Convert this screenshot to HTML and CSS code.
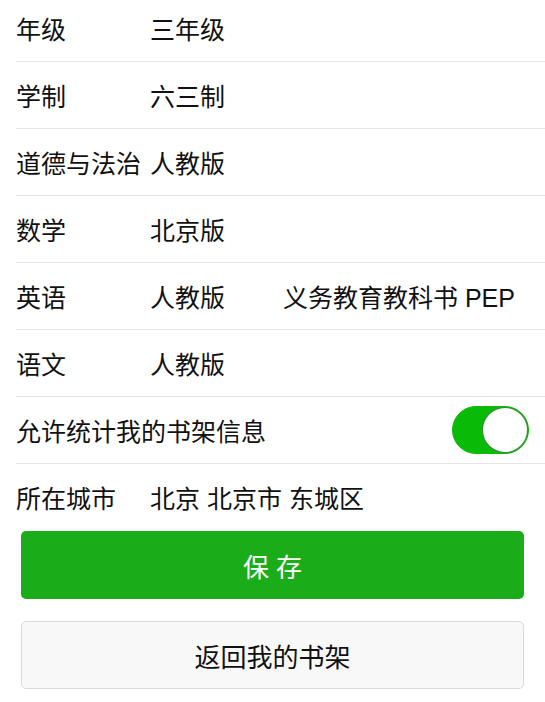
FILE: index.html
```html
<!DOCTYPE html>
<html lang="zh-CN">
<head>
    <meta charset="UTF-8">
    <meta name="viewport" content="width=device-width, initial-scale=1.0">
    <title>我的书架设置</title>
    <link rel="stylesheet" href="styles.css">
</head>
<body>
    <div class="settings">
        <div class="row">
            <span class="label">年级</span>
            <span class="value">三年级</span>
        </div>
        <div class="row">
            <span class="label">学制</span>
            <span class="value">六三制</span>
        </div>
        <div class="row">
            <span class="label">道德与法治</span>
            <span class="value">人教版</span>
        </div>
        <div class="row">
            <span class="label">数学</span>
            <span class="value">北京版</span>
        </div>
        <div class="row">
            <span class="label">英语</span>
            <span class="value">人教版</span>
            <span class="extra">义务教育教科书 PEP</span>
        </div>
        <div class="row">
            <span class="label">语文</span>
            <span class="value">人教版</span>
        </div>
        <div class="row row-switch">
            <span>允许统计我的书架信息</span>
            <label class="switch">
                <input type="checkbox" checked>
                <span class="knob"></span>
            </label>
        </div>
        <div class="row last">
            <span class="label">所在城市</span>
            <span class="city">北京 北京市 东城区</span>
        </div>
    </div>

    <div class="actions">
        <button class="btn btn-primary">保 存</button>
        <button class="btn btn-default">返回我的书架</button>
    </div>
</body>
</html>
```

FILE: styles.css
```css
body {
    margin: 0;
    padding: 0;
    background-color: #fff;
    color: #111;
    font-family: "Liberation Sans", "Noto Sans CJK SC", sans-serif;
    font-size: 25px;
}
.settings {
    margin-top: -5px;
    padding-left: 16px;
}
.row {
    display: grid;
    grid-template-columns: 134px 133px 1fr;
    align-items: center;
    height: 66px;
    border-bottom: 1px solid #e5e5e5;
    white-space: nowrap;
}
.row.last {
    border-bottom: none;
}
.row .city {
    grid-column: 2 / 4;
}
.row-switch {
    display: flex;
    justify-content: space-between;
    padding-right: 16px;
}
.switch {
    position: relative;
    display: block;
    width: 77px;
    height: 48px;
}
.switch input {
    display: none;
}
.switch .knob {
    position: absolute;
    inset: 0;
    border-radius: 24px;
    background-color: #09bb07;
    border: 1px solid #09bb07;
    box-sizing: border-box;
}
.switch .knob::after {
    content: "";
    position: absolute;
    top: 1px;
    right: 1px;
    width: 44px;
    height: 44px;
    border-radius: 50%;
    background-color: #fff;
    box-shadow: 0 0 0 1px #3a8a3a;
}
.actions {
    margin-top: 1px;
    padding: 0 21px;
    display: flex;
    flex-direction: column;
    gap: 22px;
}
.btn {
    display: block;
    width: 100%;
    height: 68px;
    border-radius: 5px;
    font-family: inherit;
    font-size: 26px;
    cursor: pointer;
}
.btn-primary {
    background-color: #1aad19;
    color: #fff;
    border: none;
}
.btn-default {
    background-color: #f8f8f8;
    color: #111;
    border: 1px solid #d9d9d9;
}
```
